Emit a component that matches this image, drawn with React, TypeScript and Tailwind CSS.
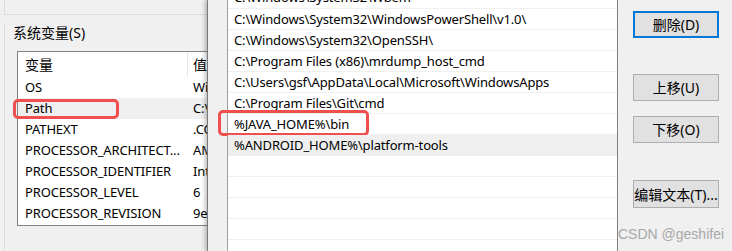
import React from 'react';

interface SysVar {
  name: string;
  value: string;
}

const sysVars: SysVar[] = [
  { name: 'OS', value: 'Windows_NT' },
  { name: 'Path', value: 'C:\\Windows\\system32;C:\\Windows' },
  { name: 'PATHEXT', value: '.COM;.EXE;.BAT;.CMD' },
  { name: 'PROCESSOR_ARCHITECT...', value: 'AMD64' },
  { name: 'PROCESSOR_IDENTIFIER', value: 'Intel64 Family 6' },
  { name: 'PROCESSOR_LEVEL', value: '6' },
  { name: 'PROCESSOR_REVISION', value: '9e0a' },
];

const pathEntries: string[] = [
  'C:\\Windows\\System32\\WindowsPowerShell\\v1.0\\',
  'C:\\Windows\\System32\\OpenSSH\\',
  'C:\\Program Files (x86)\\mrdump_host_cmd',
  'C:\\Users\\gsf\\AppData\\Local\\Microsoft\\WindowsApps',
  'C:\\Program Files\\Git\\cmd',
  '%JAVA_HOME%\\bin',
  '%ANDROID_HOME%\\platform-tools',
  '',
  '',
  '',
  '',
  '',
];

const font = "font-['Noto_Sans','Noto_Sans_CJK_SC',sans-serif]";

const App: React.FC = () => {
  return (
    <div className={`relative flex w-[732px] h-[251px] overflow-hidden bg-[#f0f0f0] text-[13px] tracking-[-0.15px] text-black ${font}`}>
      {/* background window: environment variables */}
      <div className="w-[207px] shrink-0 overflow-hidden flex flex-col">
        <div className="ml-[4px] h-[15px] w-[400px] shrink-0 border-l border-b border-[#dcdcdc]" />
        <div className="ml-[4px] mt-[9px] flex-1 border-l border-[#dcdcdc] flex flex-col">
          <div className="pl-[8px] leading-[18px] h-[18px] whitespace-nowrap text-[14px] tracking-normal">系统变量(S)</div>
          <div className="ml-[12px] mt-[9px] w-[400px] h-[175px] shrink-0 border border-[#828282] bg-white flex flex-col">
            <div className="flex h-[25px] shrink-0 items-center text-[14px] tracking-normal">
              <div className="w-[170px] h-full border-r border-[#e5e5e5] pl-[7px] flex items-center">变量</div>
              <div className="pl-[5px]">值</div>
            </div>
            {sysVars.map((v) => (
              <div
                key={v.name}
                className={`relative flex h-[21px] shrink-0 items-center whitespace-nowrap ${v.name === 'Path' ? 'bg-[#efefef]' : ''}`}
              >
                <div className="w-[170px] pl-[7px]">{v.name}</div>
                <div className="pl-[5px]">{v.value}</div>
                {v.name === 'Path' && (
                  <div className="absolute left-[-5px] top-[1px] w-[106px] h-[20px] rounded-[5px] border-[3px] border-[#ef4f4f]" />
                )}
              </div>
            ))}
          </div>
        </div>
      </div>

      {/* edit environment variable window */}
      <div className="relative z-10 flex-1 flex border-l border-[#7a7a7a] shadow-[-2px_0_4px_rgba(0,0,0,0.25)] pl-[19px]">
        <div className="w-[391px] shrink-0 h-full bg-white border-l border-[#a0a0a0] border-r-[#808080] border-r flex flex-col">
          <div className="h-[9px] shrink-0 overflow-hidden border-b border-[#f0f0f0] flex items-end pl-[6px]">
            <div className="h-[21px] leading-[21px] shrink-0 whitespace-nowrap">C:\Windows\System32\Wbem</div>
          </div>
          {pathEntries.map((p, i) => (
            <div
              key={i}
              className={`relative h-[21px] shrink-0 border-b border-[#f0f0f0] pl-[6px] leading-[20px] whitespace-nowrap ${p.startsWith('%ANDROID') ? 'bg-[#efefef]' : ''}`}
            >
              {p}
              {p.startsWith('%JAVA') && (
                <div className="absolute left-[-10px] top-[-4px] w-[151px] h-[26px] rounded-[5px] border-[3px] border-[#ef4f4f]" />
              )}
            </div>
          ))}
        </div>

        <div className="ml-[15px] w-[86px] flex flex-col pt-[11px] text-[14px] tracking-normal">
          <button className="h-[27px] border-2 border-[#0078d7] bg-[#e1e1e1] whitespace-nowrap">删除(D)</button>
          <button className="mt-[36px] h-[27px] border border-[#adadad] bg-[#e1e1e1] whitespace-nowrap">上移(U)</button>
          <button className="mt-[15px] h-[27px] border border-[#adadad] bg-[#e1e1e1] whitespace-nowrap">下移(O)</button>
          <button className="mt-[37px] h-[28px] border border-[#adadad] bg-[#e1e1e1] whitespace-nowrap">编辑文本(T)...</button>
        </div>
      </div>

      <div className="absolute z-20 left-[618px] top-[225px] leading-[18px] text-[14px] tracking-normal text-[#a8a8a8] font-['Liberation_Sans',sans-serif] whitespace-nowrap">
        CSDN @geshifei
      </div>
    </div>
  );
};

export default App;
